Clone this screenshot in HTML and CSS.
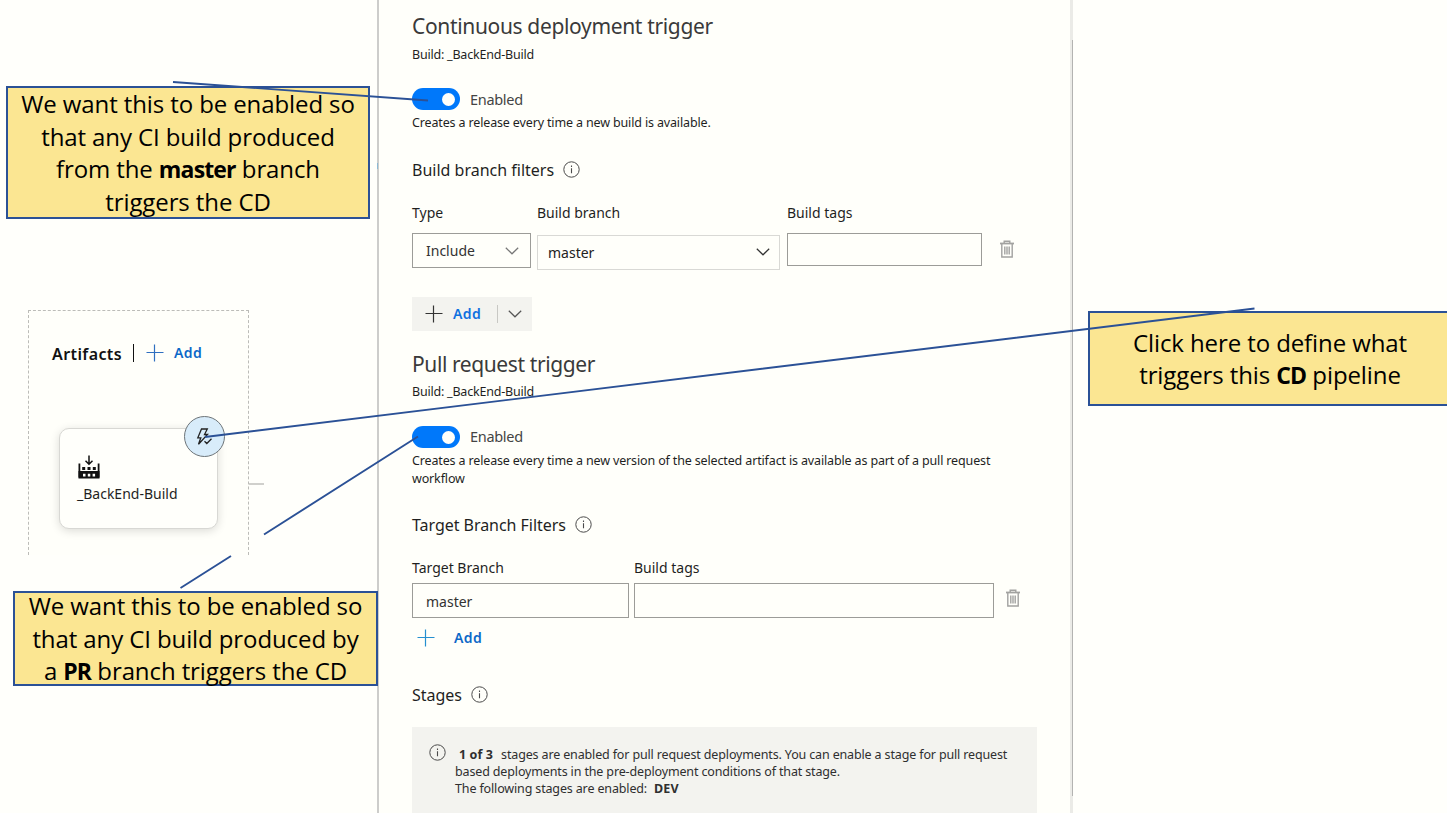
FILE: index.html
```
<!DOCTYPE html>
<html lang="en">
<head>
<meta charset="utf-8">
<title>Continuous deployment trigger</title>
<link rel="stylesheet" href="styles.css">
</head>
<body>
<svg class="defs" aria-hidden="true">
  <symbol id="info" viewBox="0 0 17 17"><circle cx="8.5" cy="8.5" r="7.7" fill="none" stroke="currentColor"/><path d="M8.5 7.2v5M8.5 4.6v1.3" fill="none" stroke="currentColor" stroke-width="1.1"/></symbol>
  <symbol id="plus" viewBox="0 0 18 18"><path d="M8.5 0.500v17M.5 8.500h17" fill="none" stroke="currentColor" stroke-width="1.2"/></symbol>
  <symbol id="chevron" viewBox="0 0 14 8"><path d="M.8.8 7 6.800 13.200.8" fill="none" stroke="currentColor" stroke-width="1.2"/></symbol>
  <symbol id="trash" viewBox="0 0 14 18"><path d="M0 3.500h14" fill="none" stroke="currentColor" stroke-width="1.800"/><path d="M4.200 3.500V1.200h5.600v2.300M1.800 4v13h10.400V4M4.800 6.500v8M7 6.500v8M9.200 6.500v8" fill="none" stroke="currentColor" stroke-width="1.400"/></symbol>
</svg>
<main class="canvas">
  <section class="pipeline">
    <div class="artifacts">
      <header class="artifacts-head">
        <h2>Artifacts</h2><span class="bar"></span>
        <svg class="plus"><use href="#plus"/></svg><span class="add">Add</span>
      </header>
      <div class="card">
        <svg class="factory" viewBox="0 0 22 24"><path d="M11 .5v8.500M7.500 5.800 11 9.200l3.500-3.400" fill="none" stroke="#111" stroke-width="1.500"/><path d="M1.400 8.500v14M20.600 8.500v14" stroke="#111" stroke-width="1.800"/><path d="M4.200 12h3v3h-3zM9.500 12h3v3h-3zM14.800 12h3v3h-3z" fill="#111"/><path fill="#111" fill-rule="evenodd" d="M.5 16h21v7.500H.5zM5 18.800v2.800h2.500v-2.800zM9.800 18.800v2.800h2.500v-2.800zM14.600 18.800v2.800h2.500v-2.800z"/></svg>
        <span>_BackEnd-Build</span>
        <div class="badge"><svg viewBox="0 0 18 18"><path d="M6.500 1h5.800L9.500 6.500h3L3.500 16.300 5.800 9.800H2.800zM9.500 13.200l2.300 2.300 4.700-4.700" fill="none" stroke="#222" stroke-width="1.300"/></svg></div>
      </div>
    </div>
    <span class="connector"></span>
  </section>

  <section class="panel">
    <h1>Continuous deployment trigger</h1>
    <p class="source">Build: _BackEnd-Build</p>
    <div class="toggle-row"><span class="toggle"></span><span class="state">Enabled</span></div>
    <p class="desc">Creates a release every time a new build is available.</p>
    <h2 class="section first">Build branch filters <svg class="info"><use href="#info"/></svg></h2>
    <div class="filters">
      <div class="field"><label>Type</label><div class="box type">Include<svg class="chev light"><use href="#chevron"/></svg></div></div>
      <div class="field"><label>Build branch</label><div class="box branch">master<svg class="chev"><use href="#chevron"/></svg></div></div>
      <div class="field tags-field"><label>Build tags</label><div class="box tags"></div></div>
      <svg class="trash"><use href="#trash"/></svg>
    </div>
    <div class="add-button"><svg class="plus"><use href="#plus"/></svg><span class="add">Add</span><span class="split"></span><svg class="chev"><use href="#chevron"/></svg></div>

    <h1 class="pr">Pull request trigger</h1>
    <p class="source">Build: _BackEnd-Build</p>
    <div class="toggle-row"><span class="toggle"></span><span class="state pr-state">Enabled</span></div>
    <p class="desc">Creates a release every time a new version of the selected artifact is available as part of a pull request<br>workflow</p>
    <h2 class="section second">Target Branch Filters <svg class="info"><use href="#info"/></svg></h2>
    <div class="filters targets">
      <div class="field"><label>Target Branch</label><div class="box">master</div></div>
      <div class="field"><label>Build tags</label><div class="box"></div></div>
      <svg class="trash"><use href="#trash"/></svg>
    </div>
    <div class="add-link"><svg class="plus"><use href="#plus"/></svg><span class="add">Add</span></div>
    <h2 class="section stages">Stages <svg class="info"><use href="#info"/></svg></h2>
    <div class="note">
      <svg class="info"><use href="#info"/></svg>
      <p><b class="count">1 of 3</b>stages are enabled for pull request deployments. You can enable a stage for pull request<br>based deployments in the pre-deployment conditions of that stage.<br>The following stages are enabled:<b class="stage">DEV</b></p>
    </div>
    <span class="scrollbar"></span>
    <span class="mark"></span>
  </section>

  <aside class="callout ci">We want this to be enabled so<br>that any CI build produced<br>from the <b>master</b> branch<br>triggers the CD</aside>
  <aside class="callout pr-note"><p>We want this to be enabled so<br>that any CI build produced by<br>a <b>PR</b> branch triggers the CD</p></aside>
  <aside class="callout cd">Click here to define what<br>triggers this <b>CD</b> pipeline</aside>
  <svg class="lines" viewBox="0 0 1447 813"><path d="M173 82 428 100.500M205 437 1254.500 308.500M180.500 588 231 556M264 534.500 418 436.500"/></svg>
</main>
</body>
</html>
```

FILE: styles.css
```
* { box-sizing: border-box; }
body { margin: 0; background: #fffffb; color: #1f1f1f; font: 14px/20px "Noto Sans", sans-serif; overflow: hidden; }
h1, h2, p { margin: 0; font-weight: 400; }
svg { display: block; flex: none; }
.defs { position: absolute; width: 0; height: 0; }
.canvas { position: relative; display: grid; grid-template-columns: 377px 696px 1fr; width: 1447px; height: 813px; overflow: hidden; }

/* pipeline artifacts */
.pipeline { display: flex; align-items: flex-start; padding: 310px 0 0 28px; }
.artifacts { width: 221px; height: 245px; padding: 32px 0 0 24px; border: 1px dashed #bcbcb8; border-bottom: 0; background: #fffffa; }
.artifacts-head { display: flex; align-items: center; height: 20px; margin-left: -1px; }
.artifacts-head h2 { width: 70px; padding-top: 1px; font-size: 16px; font-weight: 600; letter-spacing: .4px; color: #111; }
.bar { width: 1px; height: 18px; margin: 0 12px 0 11px; background: #111; }
.plus { width: 18px; height: 18px; color: #2f6fc0; }
.add { font-weight: 600; letter-spacing: .4px; color: #0c68c8; }
.artifacts-head .add { margin-left: 10px; }
.card { position: relative; width: 159px; height: 101px; margin: 65px 0 0 6px; padding: 26px 0 0 18px; border: 1px solid #d8d8d4; border-radius: 10px; background: #fffffb; box-shadow: 0 2px 10px rgba(0,0,0,.14); }
.card > span { display: block; margin: 5px 0 0 -1px; }
.factory { width: 22px; height: 24px; }
.badge { position: absolute; right: -8px; top: -13px; width: 41px; height: 41px; display: grid; place-items: center; border: 1.5px solid #6d7478; border-radius: 50%; background: #d8ecfa; }
.badge svg { width: 18px; height: 18px; margin-right: 2px; }
.connector { width: 15px; height: 2px; margin-top: 173px; background: #d0d0cc; }

/* trigger settings */
.panel { position: relative; height: 813px; padding: 10px 34px 0 33px; border-left: 2px solid #cdcdcb; border-right: 3px solid #ebebe7; background: #fffffa; }
h1 { height: 32px; font-size: 21px; line-height: 33px; letter-spacing: -.34px; color: #3a3a3a; }
.source { height: 20px; margin-top: 2px; font-size: 12.5px; line-height: 21px; letter-spacing: -.21px; }
.toggle-row { display: flex; align-items: center; gap: 11px; height: 22px; margin-top: 24px; font-size: 14.5px; letter-spacing: -.3px; color: #444; }
.state { margin: -1px 0 0 -1px; }
.pr-state { margin-top: -2px; }
.toggle { display: flex; align-items: center; justify-content: flex-end; width: 48px; height: 22px; padding-right: 5px; border-radius: 11px; background: #0078fa; }
.toggle::after { content: ""; width: 13px; height: 13px; border-radius: 50%; background: #fffffa; }
.desc { margin-top: 4px; font-size: 12.5px; line-height: 17.3px; letter-spacing: -.145px; white-space: nowrap; }
.section { display: flex; align-items: center; gap: 9px; height: 24px; font-size: 16px; }
.info { width: 17px; height: 17px; color: #4a4a4a; }
.section .info { margin-top: -1px; }
.first { margin-top: 27px; }
.filters { display: grid; grid-template-columns: 119px 243px 195px 14px; column-gap: 6px; margin-top: 21px; height: 66px; }
label { display: block; height: 20px; }
.box { display: flex; align-items: center; justify-content: space-between; height: 35px; margin-top: 10px; padding: 0 11px 0 13px; border: 1px solid #9c9c98; color: #333; }
.branch { margin-top: 12px; padding: 0 9px 0 10px; border-color: #d9d9d5; color: #222; }
.tags-field { margin-left: 1px; margin-right: -1px; }
.tags { height: 33px; }
.chev { width: 14px; height: 8px; color: #333; }
.chev.light { color: #777; }
.branch .chev { margin-top: -2px; }
.trash { width: 14px; height: 18px; margin: 37px 0 0 13px; color: #a2a2a0; }
.add-button { display: flex; align-items: center; width: 120px; height: 34px; margin-top: 28px; padding-left: 13px; background: #f3f3ef; }
.add-button .plus { color: #333; }
.add-button .add { width: 44px; margin-left: 10px; color: #0f70e0; }
.split { width: 1px; height: 18px; margin-right: 9px; background: #c8c8c4; }
.add-button .chev { width: 16px; color: #555; }
.pr { margin-top: 17px; letter-spacing: -.4px; line-height: 32px; }
.pr + .source { line-height: 20px; }
.second { margin-top: 26px; }
.second, .stages { letter-spacing: -.04px; }
.targets { grid-template-columns: 217px 360px 14px; column-gap: 5px; height: 60px; }
.targets .box { margin-top: 5px; padding-top: 3px; }
.targets .trash { margin: 31px 0 0 7px; }
.add-link { display: flex; align-items: center; gap: 19px; height: 24px; margin-top: 8px; padding: 1px 0 0 5px; }
.add-link .plus { color: #258fd0; }
.stages { margin-top: 33px; }
.note { display: flex; gap: 9px; width: 625px; height: 87px; margin-top: 20px; padding: 17px 0 0 17px; background: #f3f3ef; color: #2f2f2f; }
.note p { padding-top: 2px; font-size: 12.5px; line-height: 17.3px; letter-spacing: -.145px; white-space: nowrap; }
.count { margin: 0 8px 0 4px; letter-spacing: .1px; }
.stage { margin-left: 7px; letter-spacing: .15px; }
.scrollbar { position: absolute; right: -3px; top: 40px; width: 1px; height: 756px; background: #b3b3b1; }
.mark { position: absolute; left: -2px; top: 163px; width: 1px; height: 6px; background: #8db9d4; }

/* annotations */
.callout { position: absolute; border: 2px solid #2b5196; background: #fbe692; color: #000; font: 24px/32.600px "Open Sans", sans-serif; letter-spacing: -.1px; text-align: center; white-space: nowrap; }
.callout b { font-size: 23px; letter-spacing: -.850px; }
.ci { left: 6px; top: 86px; width: 364px; height: 133px; }
.pr-note { left: 13px; top: 591px; width: 365px; height: 95px; line-height: 32.500px; }
.pr-note p { margin-top: -3px; }
.cd { left: 1088px; top: 311px; width: 364px; height: 95px; padding-top: 14px; line-height: 32.200px; }
.lines { position: absolute; left: 0; top: 0; width: 1447px; height: 813px; fill: none; stroke: #2b5196; stroke-width: 1.900; }
```
